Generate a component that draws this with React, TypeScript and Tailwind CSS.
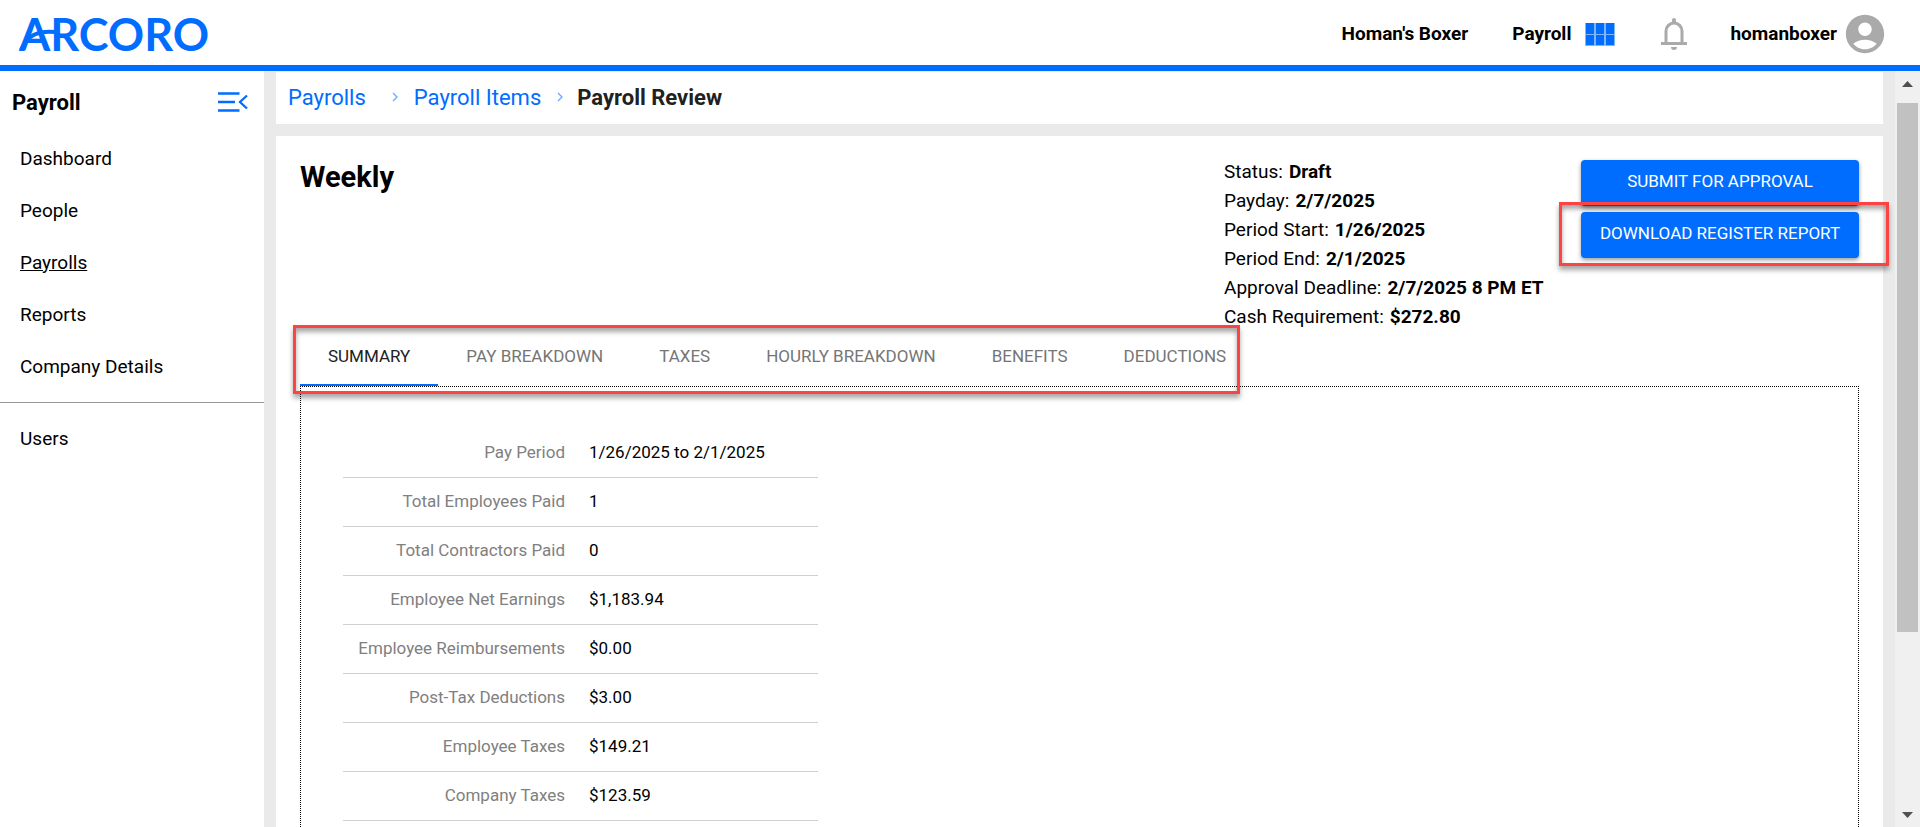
import React, { useState } from 'react';
import { MdAccountCircle } from 'react-icons/md';

const NAV_ITEMS = ['Dashboard', 'People', 'Payrolls', 'Reports', 'Company Details'];

const TABS = ['Summary', 'Pay Breakdown', 'Taxes', 'Hourly Breakdown', 'Benefits', 'Deductions'];

const DETAILS = [
  { label: 'Status', value: 'Draft' },
  { label: 'Payday', value: '2/7/2025' },
  { label: 'Period Start', value: '1/26/2025' },
  { label: 'Period End', value: '2/1/2025' },
  { label: 'Approval Deadline', value: '2/7/2025 8 PM ET' },
  { label: 'Cash Requirement', value: '$272.80' },
];

const SUMMARY = [
  { label: 'Pay Period', value: '1/26/2025 to 2/1/2025' },
  { label: 'Total Employees Paid', value: '1' },
  { label: 'Total Contractors Paid', value: '0' },
  { label: 'Employee Net Earnings', value: '$1,183.94' },
  { label: 'Employee Reimbursements', value: '$0.00' },
  { label: 'Post-Tax Deductions', value: '$3.00' },
  { label: 'Employee Taxes', value: '$149.21' },
  { label: 'Company Taxes', value: '$123.59' },
];

const Logo = () => (
  <svg width="200" height="60" viewBox="0 0 200 60" role="img" aria-label="Arcoro" className="overflow-visible text-[#006dff]">
    <text x="1" y="47" fontSize="45" fontWeight="700" fill="currentColor" className="font-[Lato,sans-serif]">
      ARCORO
    </text>
    <path d="M3 46C9 32 19 26 38 28" fill="none" stroke="currentColor" strokeWidth="4" />
  </svg>
);

const GridIcon = () => (
  <svg width="30" height="23" viewBox="0 0 30 23" aria-hidden="true">
    <path d="M0 0h30v23H0z" fill="#80b6ff" />
    <path d="M1 0h8v11H1zM11 0h8v11h-8zM21 0h8v11h-8zM1 12h8v10H1zM11 12h8v10h-8zM21 12h8v10h-8z" fill="#006dff" />
  </svg>
);

const BellIcon = () => (
  <svg width="26" height="32" viewBox="0 0 26 32" className="text-[#aaaaaa]" aria-hidden="true">
    <path d="M5 26V13a8 8 0 0 1 16 0v13" fill="none" stroke="currentColor" strokeWidth="3" />
    <path d="M0 24h26v3H0zM10 29h6a3 3 0 0 1-6 0zM11 5V2a2 2 0 0 1 4 0v3z" fill="currentColor" />
  </svg>
);

const MenuOpenIcon = () => (
  <svg width="30" height="20" viewBox="0 0 30 20" fill="none" stroke="#006dff" strokeWidth="2.3" aria-hidden="true">
    <path d="M0 1.500h21.500M0 10h17M0 18.500h21.500M29 3.500L22 10l7 6.500" />
  </svg>
);

const CrumbArrow = () => (
  <svg width="6" height="10" viewBox="0 0 6 10" aria-hidden="true">
    <path d="M1 1l4 4-4 4" fill="none" stroke="#66a7ff" strokeWidth="1.3" />
  </svg>
);

const Header = () => (
  <header className="flex h-[71px] shrink-0 items-center justify-between border-b-6 border-[#006dff] bg-white pt-[3px] pl-[18px] pr-8">
    <a href="#home">
      <Logo />
    </a>
    <div className="flex items-center text-[19px] font-bold">
      <span>Homan's Boxer</span>
      <button className="ml-11 flex items-center gap-[14px]">
        Payroll
        <GridIcon />
      </button>
      <button className="ml-[46px]" aria-label="Notifications">
        <BellIcon />
      </button>
      <button className="ml-[43px] flex items-center gap-[5px]">
        homanboxer
        <MdAccountCircle size={46} className="text-[#aaaaaa]" />
      </button>
    </div>
  </header>
);

const Sidebar = () => (
  <aside className="w-[264px] shrink-0 bg-white">
    <div className="flex h-[62px] items-center justify-between pl-3 pr-4">
      <h2 className="text-[22px] font-bold">Payroll</h2>
      <button aria-label="Collapse menu">
        <MenuOpenIcon />
      </button>
    </div>
    <nav className="text-[19px]">
      {NAV_ITEMS.map(item => (
        <a
          key={item}
          href="#nav"
          className={`flex h-[52px] items-center pl-5 ${item === 'Payrolls' ? 'underline' : ''}`}
        >
          {item}
        </a>
      ))}
      <hr className="mt-[9px] mb-[10px] border-[#999999]" />
      <a href="#users" className="flex h-[52px] items-center pl-5">
        Users
      </a>
    </nav>
  </aside>
);

const Breadcrumbs = () => (
  <nav className="mt-px flex h-[52px] items-center bg-white pl-3 pb-[2px] text-[22px]">
    <a href="#payrolls" className="mr-[26px] text-[#006dff]">Payrolls</a>
    <CrumbArrow />
    <a href="#items" className="mx-4 text-[#006dff]">Payroll Items</a>
    <CrumbArrow />
    <span className="ml-[14px] font-bold text-[#212121]">Payroll Review</span>
  </nav>
);

// Red frame drawn over the area being pointed out
const highlight =
  'pointer-events-none absolute border-3 border-[#ff4242] shadow-[0_4px_5px_rgba(0,0,0,0.35),inset_0_4px_5px_rgba(0,0,0,0.35)]';

const ActionButton: React.FC<{ children: React.ReactNode }> = ({ children }) => (
  <button className="h-[46px] w-full rounded bg-[#006dff] pb-[2px] text-[17px] uppercase text-white shadow-[0_2px_4px_rgba(0,0,0,0.4)]">
    {children}
  </button>
);

const ScrollTrack = () => (
  <div className="flex w-[25px] shrink-0 flex-col items-center bg-[#f0f0f0]" aria-hidden="true">
    <svg width="25" height="32" viewBox="0 0 25 32">
      <path d="M7 16h11l-5.500-6z" fill="#505050" />
    </svg>
    <div className="flex w-[21px] flex-1 flex-col">
      <div className="flex-13 bg-[#c1c1c1]" />
      <div className="flex-4" />
    </div>
    <svg width="25" height="32" viewBox="0 0 25 32">
      <path d="M7 17h11l-5.500 6z" fill="#505050" />
    </svg>
  </div>
);

const App: React.FC = () => {
  const [activeTab, setActiveTab] = useState('Summary');

  return (
    <div className="flex h-screen flex-col overflow-hidden bg-[#eaeaea] font-[Roboto,sans-serif] text-black">
      <Header />
      <div className="flex min-h-0 flex-1">
        <Sidebar />

        <main className="flex min-w-0 flex-1 flex-col overflow-hidden px-3">
          <Breadcrumbs />

          <section className="mt-3 flex-1 bg-white px-6 pt-5">
            <div className="flex h-[165px] items-start">
              <h1 className="mt-[3px] flex-1 text-[29px] leading-[36px] font-bold">Weekly</h1>
              <dl className="mt-px w-[357px] text-[19px] leading-[29px]">
                {DETAILS.map(({ label, value }) => (
                  <div key={label} className="flex gap-[6px]">
                    <dt>{label}:</dt>
                    <dd className="font-bold">{value}</dd>
                  </div>
                ))}
              </dl>
              <div className="relative flex w-[278px] flex-col gap-[6px] pt-1">
                <ActionButton>Submit for Approval</ActionButton>
                <ActionButton>Download Register Report</ActionButton>
                <div className={`${highlight} -left-[22px] top-[46px] h-[64px] w-[330px]`} />
              </div>
            </div>

            <div className="relative flex h-[65px]" role="tablist">
              {TABS.map(tab => (
                <button
                  key={tab}
                  role="tab"
                  aria-selected={tab === activeTab}
                  onClick={() => setActiveTab(tab)}
                  className={`border-b-2 px-7 pt-2 text-[17px] uppercase ${
                    tab === activeTab ? 'border-[#006dff] text-[#212121]' : 'border-transparent text-[#757575]'
                  }`}
                >
                  {tab}
                </button>
              ))}
              <div className={`${highlight} -left-[7px] top-1 h-[69px] w-[947px]`} />
            </div>

            <div className="h-full border border-dotted border-black pt-[41px] pl-[42px]">
              <table className="w-[475px] text-[17px]">
                <tbody>
                  {SUMMARY.map(({ label, value }) => (
                    <tr key={label} className="h-[49px] border-b border-[#d0d0d0]">
                      <th scope="row" className="w-[222px] text-right font-normal text-[#808080]">{label}</th>
                      <td className="pl-6">{value}</td>
                    </tr>
                  ))}
                </tbody>
              </table>
            </div>
          </section>
        </main>

        <ScrollTrack />
      </div>
    </div>
  );
};

export default App;
